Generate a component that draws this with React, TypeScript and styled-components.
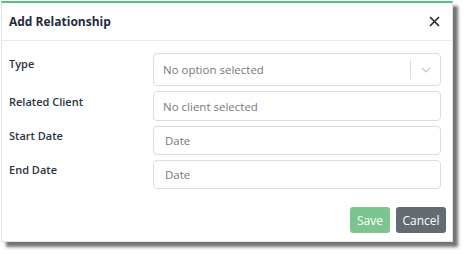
import React from "react";
import styled, { createGlobalStyle } from "styled-components";

const Global = createGlobalStyle`
  html, body { margin: 0; padding: 0; background: #ffffff; }
  body { font-family: "Open Sans", "Noto Sans", sans-serif; }
  * { box-sizing: border-box; }
`;

const Stage = styled.div`
  padding: 1px 0 0 1px;
  width: 466px;
  height: 254px;
`;

const Dialog = styled.div`
  width: 452px;
  height: 241px;
  background: #fff;
  border: 1px solid #e2e2e2;
  border-top: 2px solid #5cbf7d;
  box-shadow: 5px 5px 3px rgba(0, 0, 0, 0.55);
  display: flex;
  flex-direction: column;
`;

const Header = styled.div`
  height: 38px;
  display: flex;
  align-items: center;
  justify-content: space-between;
  padding: 0 10px 0 7px;
  border-bottom: 1px solid #e9e9e9;
`;

const Title = styled.div`
  font-size: 12px;
  font-weight: 700;
  color: #1e2b3c;
`;

const Close = styled.button`
  border: 0;
  background: none;
  padding: 0;
  width: 16px;
  height: 16px;
  display: flex;
  align-items: center;
  justify-content: center;
  cursor: pointer;
`;

const Body = styled.div`
  padding: 12px 11px 0 7px;
  display: grid;
  grid-template-columns: 144px 288px;
  row-gap: 5px;
`;

const Label = styled.div<{ $offset: number }>`
  font-size: 11px;
  font-weight: 600;
  color: #2a3442;
  padding-top: ${(p) => p.$offset}px;
`;

const Field = styled.div<{ $h: number; $pad?: number }>`
  height: ${(p) => p.$h}px;
  border: 1px solid #dcdcdc;
  border-radius: 4px;
  display: flex;
  align-items: center;
  padding-left: ${(p) => p.$pad ?? 9}px;
  font-size: 11.5px;
  color: #777;
`;

const Placeholder = styled.span`
  flex: 1;
`;

const Sep = styled.span`
  width: 1px;
  height: 19px;
  background: #dcdcdc;
`;

const Chevron = styled.span`
  width: 29px;
  display: flex;
  justify-content: center;
  align-items: center;
`;

const Footer = styled.div`
  margin-top: auto;
  padding: 0 6px 8px 0;
  display: flex;
  justify-content: flex-end;
  gap: 6px;
`;

const Btn = styled.button<{ $bg: string; $w: number }>`
  width: ${(p) => p.$w}px;
  height: 26px;
  border: 0;
  border-radius: 3px;
  background: ${(p) => p.$bg};
  color: #fff;
  font-family: "Open Sans", "Noto Sans", sans-serif;
  font-size: 12px;
  padding: 0;
`;

export default function App() {
  return (
    <Stage>
      <Global />
      <Dialog>
        <Header>
          <Title>Add Relationship</Title>
          <Close aria-label="close">
            <svg width="11" height="11" viewBox="0 0 11 11">
              <path d="M1 1L10 10M10 1L1 10" stroke="#1f2630" strokeWidth="1.6" />
            </svg>
          </Close>
        </Header>
        <Body>
          <Label $offset={3}>Type</Label>
          <Field $h={33}>
            <Placeholder>No option selected</Placeholder>
            <Sep />
            <Chevron>
              <svg width="10" height="6" viewBox="0 0 10 6">
                <path d="M1 1L5 5L9 1" stroke="#c4c4c4" strokeWidth="1.2" fill="none" />
              </svg>
            </Chevron>
          </Field>
          <Label $offset={3}>Related Client</Label>
          <Field $h={30}>
            <Placeholder>No client selected</Placeholder>
          </Field>
          <Label $offset={2}>Start Date</Label>
          <Field $h={29} $pad={11}>
            <Placeholder>Date</Placeholder>
          </Field>
          <Label $offset={2}>End Date</Label>
          <Field $h={29} $pad={11}>
            <Placeholder>Date</Placeholder>
          </Field>
        </Body>
        <Footer>
          <Btn $bg="#7cc58f" $w={40}>Save</Btn>
          <Btn $bg="#646c73" $w={50}>Cancel</Btn>
        </Footer>
      </Dialog>
    </Stage>
  );
}
